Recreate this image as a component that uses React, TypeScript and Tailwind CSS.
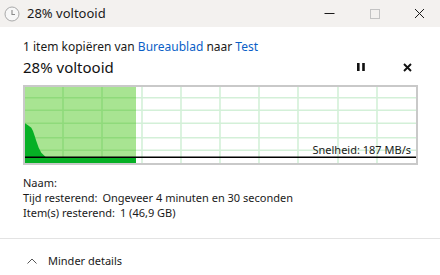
import React from 'react'

const FONT = { fontFamily: '"Segoe UI", "Noto Sans", sans-serif' }

const vLines = [38, 77, 117, 156, 195, 234, 273, 313, 352]
const hLines = [10.7, 23.3, 36.3, 50.7, 63.3]

function ClockIcon() {
  return (
    <svg width="16" height="16" viewBox="0 0 16 16">
      <circle cx="8" cy="8" r="7" fill="#f7f7f7" stroke="#a9a9a9" strokeWidth="1" />
      <path d="M8 4 V8.5 H11" fill="none" stroke="#8a8a8a" strokeWidth="1.1" />
    </svg>
  )
}

function SpeedChart() {
  return (
    <div className="relative w-[395px] h-[80px] border-2 border-[#c9c9c9]">
      <svg width="391" height="76" viewBox="0 0 391 76" className="block">
        <rect x="0" y="0" width="391" height="76" fill="#ffffff" />
        <rect x="0" y="0" width="111" height="76" fill="#a8e492" />
        {vLines.map((x) => (
          <line key={x} x1={x} y1="0" x2={x} y2="76" stroke={x < 111 ? '#8fda7b' : '#d3f0d8'} strokeWidth="1.6" />
        ))}
        {hLines.map((y) => (
          <React.Fragment key={y}>
            <line x1="111" y1={y} x2="391" y2={y} stroke="#d3f0d8" strokeWidth="1.6" />
            <line x1="0" y1={y} x2="111" y2={y} stroke="#8fda7b" strokeWidth="1.6" />
          </React.Fragment>
        ))}
        <path
          d="M0 36.3 L3 38.3 L6.3 40.7 L8 44 L9.7 49 L11.3 54 L13.7 60.7 L16.3 65.7 L19.7 69 L21 70.5 L0 70.5 Z"
          fill="#06b025"
        />
        <rect x="0" y="71" width="111" height="5" fill="#06b025" />
        <line x1="0" y1="70.2" x2="391" y2="70.2" stroke="#000000" strokeWidth="1.6" />
      </svg>
      <span className="absolute right-[5px] top-[55px] text-[11px] leading-[15px] text-[#1a1a1a]">
        Snelheid: 187 MB/s
      </span>
    </div>
  )
}

export default function App() {
  return (
    <div className="w-[440px] h-[275px] bg-white flex flex-col overflow-hidden text-black" style={FONT}>
      {/* title bar */}
      <div className="h-[27px] bg-[#f3f1ef] flex items-center shrink-0">
        <div className="ml-[4px] w-[16px] h-[16px]">
          <ClockIcon />
        </div>
        <span className="ml-[7px] text-[13px] text-[#1a1a1a]">28% voltooid</span>
        <div className="ml-auto flex items-center h-full">
          <div className="w-[46px] h-full flex items-center justify-center">
            <svg width="11" height="11" viewBox="0 0 11 11">
              <line x1="0.5" y1="5.5" x2="10.5" y2="5.5" stroke="#1a1a1a" strokeWidth="1" />
            </svg>
          </div>
          <div className="w-[46px] h-full flex items-center justify-center">
            <svg width="10" height="10" viewBox="0 0 10 10">
              <rect x="0.5" y="0.5" width="9" height="9" fill="none" stroke="#c3c3c3" strokeWidth="1" />
            </svg>
          </div>
          <div className="w-[42px] h-full flex items-center justify-center">
            <svg width="11" height="11" viewBox="0 0 11 11">
              <path d="M1 1 L10 10 M10 1 L1 10" stroke="#1a1a1a" strokeWidth="1" />
            </svg>
          </div>
        </div>
      </div>

      {/* body */}
      <div className="px-[23px] pt-[12px] shrink-0">
        <div className="text-[12px] leading-[15px] text-[#1a1a1a]">
          1 item kopiëren van <span className="text-[#0a5fc7]">Bureaublad</span> naar{' '}
          <span className="text-[#0a5fc7]">Test</span>
        </div>
        <div className="flex items-center h-[24px] mt-[1px]">
          <span className="text-[15px] leading-[20px] text-[#111]">28% voltooid</span>
          <div className="ml-auto flex items-center">
            <svg width="8" height="8" viewBox="0 0 8 8" className="mr-[38px]">
              <rect x="0" y="0" width="2.6" height="8" fill="#111" />
              <rect x="5.2" y="0" width="2.6" height="8" fill="#111" />
            </svg>
            <svg width="9" height="9" viewBox="0 0 9 9" className="mr-[5px]">
              <path d="M1 1 L8 8 M8 1 L1 8" stroke="#111" strokeWidth="1.9" />
            </svg>
          </div>
        </div>
        <div className="mt-[6px]">
          <SpeedChart />
        </div>
        <div className="mt-[10px] text-[11px] leading-[15px] text-[#1a1a1a]">
          <div>Naam:</div>
          <div className="flex gap-[5px]">
            <span>Tijd resterend:</span>
            <span>Ongeveer 4 minuten en 30 seconden</span>
          </div>
          <div className="flex gap-[5px]">
            <span>Item(s) resterend:</span>
            <span>1 (46,9 GB)</span>
          </div>
        </div>
      </div>

      <div className="mt-[18px] h-px bg-[#e3e3e3] shrink-0" />

      <div className="flex items-center h-[44px] pl-[27px] shrink-0">
        <svg width="10" height="6" viewBox="0 0 10 6">
          <path d="M0.5 5.5 L5 1 L9.5 5.5" fill="none" stroke="#555" strokeWidth="1" />
        </svg>
        <span className="ml-[11px] text-[11px] text-[#1a1a1a]">Minder details</span>
      </div>
    </div>
  )
}
